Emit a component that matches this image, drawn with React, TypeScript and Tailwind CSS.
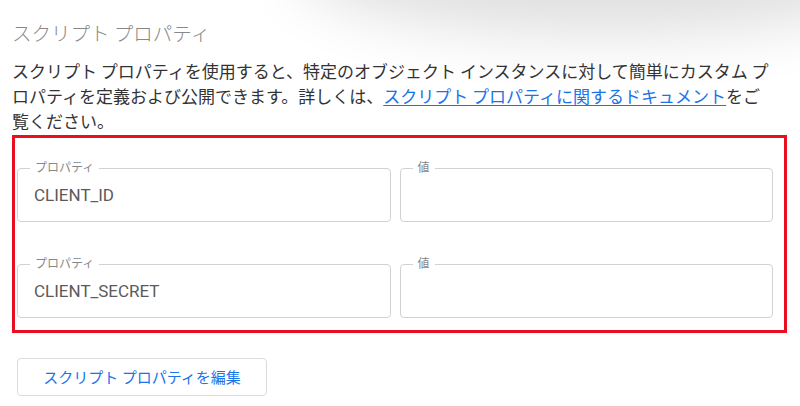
import { Fragment } from "react";

const rows = [
  { key: "CLIENT_ID", value: "" },
  { key: "CLIENT_SECRET", value: "" },
];

function OutlinedField({ label, value }: { label: string; value: string }) {
  return (
    <div className="relative h-[54px] rounded-[4px] border border-[#d2d2d2] bg-white">
      <span className="absolute left-[12px] top-[-9px] bg-white px-[5px] text-[12px] leading-[14px] text-[#888]">
        {label}
      </span>
      <div className="flex h-full items-center pl-[16px] pt-[2px] text-[17px] text-[#5a5a5a] [font-family:Roboto,'Noto_Sans_CJK_JP',sans-serif]">
        {value}
      </div>
    </div>
  );
}

export default function App() {
  return (
    <div className="relative h-[406px] w-full overflow-hidden bg-white [font-family:'Noto_Sans_CJK_JP','Noto_Sans',sans-serif]">
      {/* shadow cast by the panel above */}
      <div className="pointer-events-none absolute left-[330px] right-[-80px] top-[-70px] h-[70px] rounded-[50%] shadow-[0_0_60px_34px_rgba(0,0,0,0.13)]" />

      <div className="relative px-[12px] pt-[20px]">
        <h2 className="text-[19.5px] font-light leading-[26px] text-[#888]">
          スクリプト プロパティ
        </h2>
        <p className="mt-[12px] text-[17px] leading-[25px] text-[#333]">
          スクリプト プロパティを使用すると、特定のオブジェクト インスタンスに対して簡単にカスタム プ
          <br />
          ロパティを定義および公開できます。詳しくは、
          <a className="text-[#1a73e8] underline underline-offset-2">
            スクリプト プロパティに関するドキュメント
          </a>
          をご
          <br />
          覧ください。
        </p>
      </div>

      <div className="relative ml-[12px] mt-[2px] w-[775px] border-[3px] border-[#e8101f] pb-[12px] pl-[2px] pr-[11px] pt-[30px]">
        <div className="grid grid-cols-2 gap-x-[9px] gap-y-[42px]">
          {rows.map((row) => (
            <Fragment key={row.key}>
              <OutlinedField label="プロパティ" value={row.key} />
              <OutlinedField label="値" value={row.value} />
            </Fragment>
          ))}
        </div>
      </div>

      <button className="relative ml-[17px] mt-[25px] flex h-[38px] w-[250px] items-center justify-center rounded-[4px] border border-[#dadce0] bg-white text-[15px] text-[#1a73e8]">
        スクリプト プロパティを編集
      </button>
    </div>
  );
}
